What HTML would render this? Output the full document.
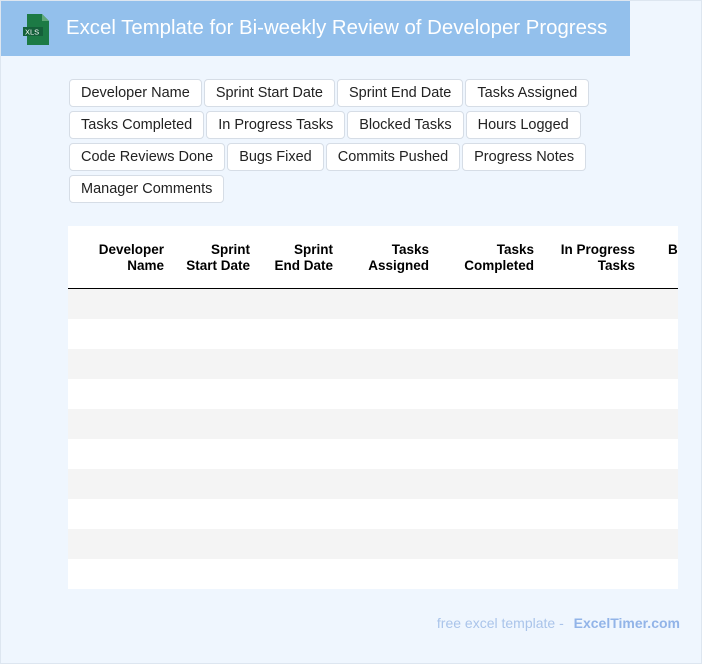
<!DOCTYPE html>
<html><head><style>
*{box-sizing:border-box;margin:0;padding:0}
body{width:702px;height:664px;background:#eff6fe;font-family:"Liberation Sans",Arial,sans-serif;position:relative;overflow:hidden}
.frame{position:absolute;left:0;top:0;width:702px;height:664px;border:1px solid #dde6f0;pointer-events:none}
.hdr{position:absolute;left:0;top:0;width:630px;height:56px;background:#93c0ec}
.hdr h1{position:absolute;left:66px;top:17px;font-size:20.4px;font-weight:normal;color:#fff;white-space:nowrap}
.tags{position:absolute;left:69px;top:79px;width:560px}
.tag{display:inline-block;height:28px;line-height:26px;padding:0 11px;background:#fff;border:1px solid #d6dde6;border-radius:4px;font-size:14.5px;color:#222;margin:0 2px 4px 0;vertical-align:top}
.tbl{position:absolute;left:68px;top:226px;width:610px;height:363px;background:#fff;overflow:hidden}
.th{position:absolute;top:16px;font-weight:bold;font-size:13.5px;text-align:right;line-height:16px;color:#000;white-space:nowrap}
.line{position:absolute;left:0;top:62px;width:610px;height:1px;background:#000}
.row{position:absolute;left:0;width:610px;height:30px}
.foot{position:absolute;right:22px;top:615px;font-size:14px;color:#aac4ea}
.foot b{color:#92b4e8;margin-left:6px}
</style></head><body>
<div class="hdr">
<svg style="position:absolute;left:21px;top:13px" width="30" height="32" viewBox="0 0 30 32"><path d="M6 1h15l7 7v24H6z" fill="#1c7a45"/><path d="M21 1v7h7z" fill="#5fa879"/><rect x="2" y="14" width="20" height="9" fill="#14603a"/><text x="4" y="21.5" font-size="7.5" fill="#fff" font-family="Liberation Sans">XLS</text></svg>
<h1>Excel Template for Bi-weekly Review of Developer Progress</h1></div>
<div class="tags">
<span class="tag">Developer Name</span><span class="tag">Sprint Start Date</span><span class="tag">Sprint End Date</span><span class="tag">Tasks Assigned</span><span class="tag">Tasks Completed</span><span class="tag">In Progress Tasks</span><span class="tag">Blocked Tasks</span><span class="tag">Hours Logged</span><span class="tag">Code Reviews Done</span><span class="tag">Bugs Fixed</span><span class="tag">Commits Pushed</span><span class="tag">Progress Notes</span><span class="tag">Manager Comments</span>
</div>
<div class="tbl">
<div class="th" style="right:514px">Developer<br>Name</div>
<div class="th" style="right:428px">Sprint<br>Start Date</div>
<div class="th" style="right:345px">Sprint<br>End Date</div>
<div class="th" style="right:249px">Tasks<br>Assigned</div>
<div class="th" style="right:144px">Tasks<br>Completed</div>
<div class="th" style="right:43px">In Progress<br>Tasks</div>
<div class="th" style="left:600px;text-align:left">B</div>
<div class="line"></div>
<div class="row" style="top:63px;background:#f4f4f4"></div>
<div class="row" style="top:123px;background:#f4f4f4"></div>
<div class="row" style="top:183px;background:#f4f4f4"></div>
<div class="row" style="top:243px;background:#f4f4f4"></div>
<div class="row" style="top:303px;background:#f4f4f4"></div>
</div>
<div class="foot">free excel template - <b>ExcelTimer.com</b></div>
<div class="frame"></div>
</body></html>
